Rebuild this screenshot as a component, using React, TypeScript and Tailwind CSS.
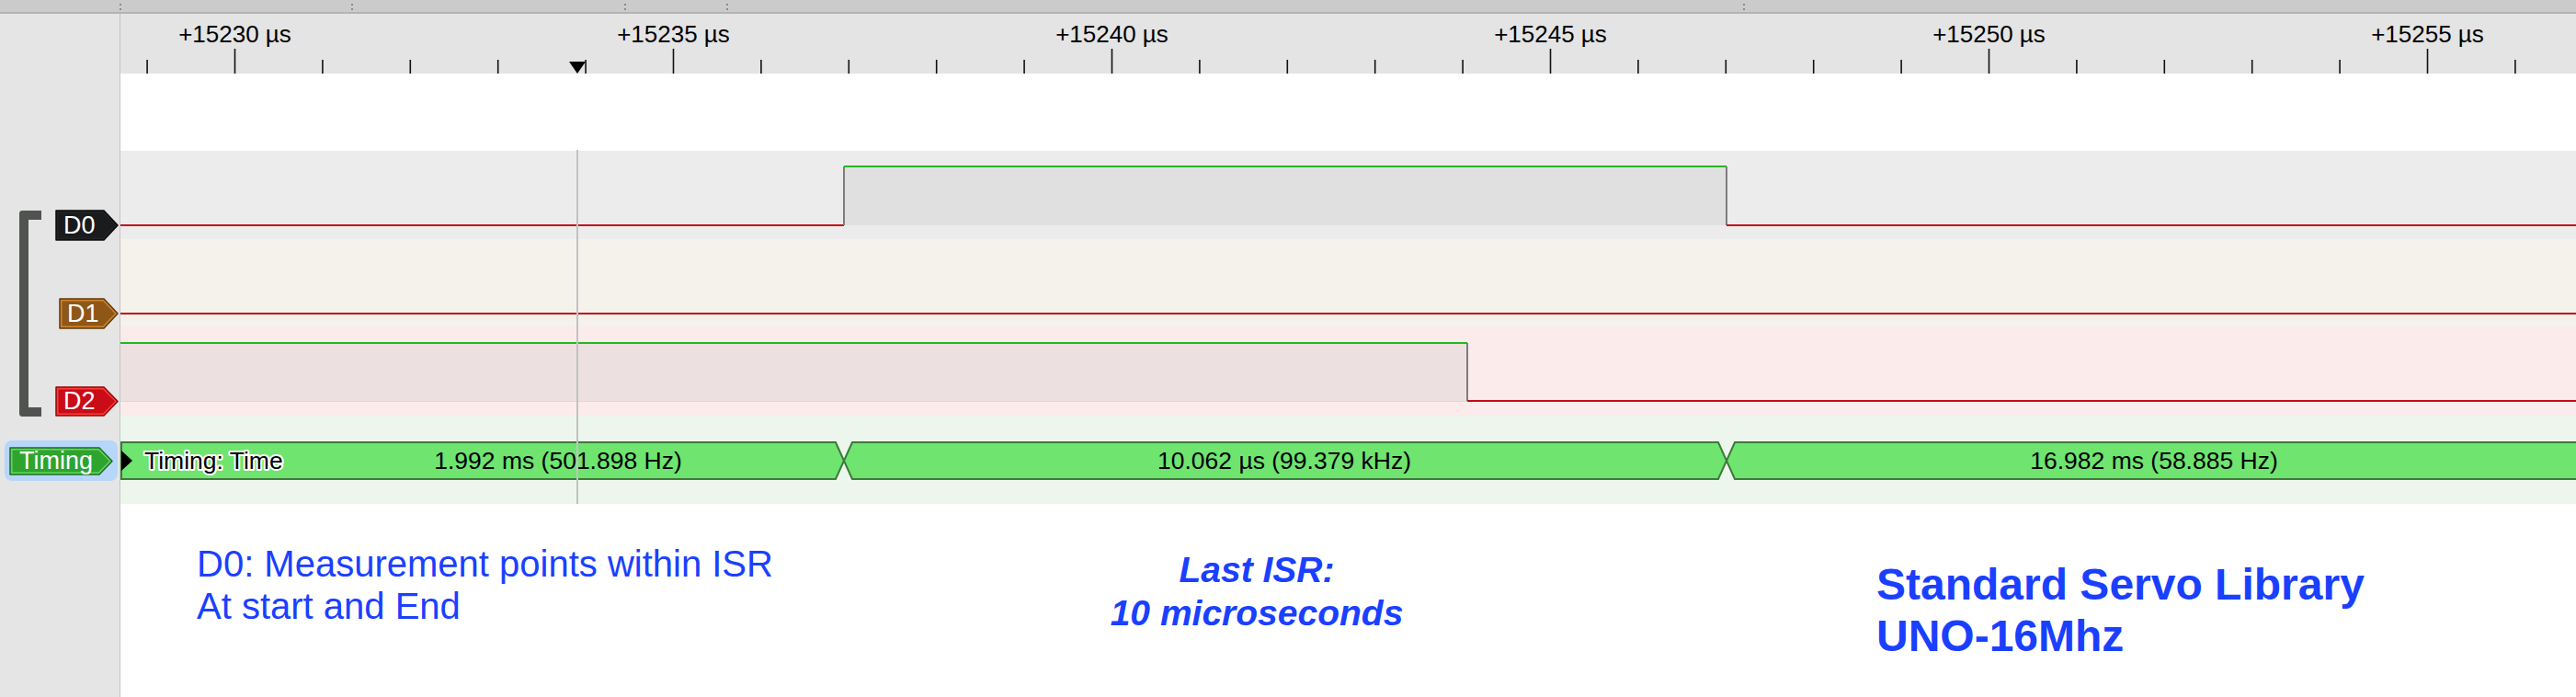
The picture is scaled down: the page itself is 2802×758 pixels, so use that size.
import React from "react";

const PX = 95.4;
const X0 = 124.5; // svg x of +15230 µs inside wave column
const W = 2671;
const C1 = 787; // D0 rise
const C2 = 1747; // D0 fall
const D2F = 1465; // D2 fall

function Header() {
  const items: React.ReactNode[] = [];
  for (let k = -1; k <= 26; k++) {
    const x = X0 + k * PX;
    const major = k % 5 === 0;
    items.push(
      <line key={"t" + k} x1={x} x2={x} y1={major ? 38 : 50} y2={65} stroke="#111" strokeWidth={1.6} />
    );
    if (major) {
      items.push(
        <text key={"l" + k} x={x} y={31} textAnchor="middle" fontSize={26} fill="#000" fontFamily="'Liberation Sans', Arial, sans-serif">
          {`+${15230 + k} µs`}
        </text>
      );
    }
  }
  return (
    <div className="h-[65px] bg-[#e4e4e4]">
      <svg width={W} height={65} className="block">
        {items}
        <polygon points="488,52 506,52 497,65" fill="#000" />
      </svg>
    </div>
  );
}

function Label({ w, h, tip, fill, rim, edge, text, pl }: { w: number; h: number; tip: number; fill: string; rim: string; edge: string; text: string; pl: number }) {
  const p = `1,1 ${w - tip},1 ${w - 1},${h / 2} ${w - tip},${h - 1} 1,${h - 1}`;
  const pi = `3.5,3.5 ${w - tip - 1},3.5 ${w - 4},${h / 2} ${w - tip - 1},${h - 3.5} 3.5,${h - 3.5}`;
  return (
    <div className="relative flex items-center" style={{ width: w, height: h }}>
      <svg width={w} height={h} className="absolute inset-0">
        <polygon points={p} fill={rim} stroke={edge} strokeWidth={1.5} strokeLinejoin="round" />
        <polygon points={pi} fill={fill} />
      </svg>
      <span className="relative text-[27px] leading-none text-white" style={{ paddingLeft: pl }}>
        {text}
      </span>
    </div>
  );
}

export default function App() {
  return (
    <div className="w-[2802px] h-[758px] overflow-hidden bg-white flex flex-col font-['Liberation_Sans',Arial,Helvetica,sans-serif]">
      {/* top bar */}
      <div className="relative h-[15px] shrink-0 bg-[#cbcbcb] border-b-2 border-[#b3b3b3]">
        {[130, 382, 679, 790, 1896].map((x) => (
          <div key={x} className="absolute top-[4px] flex flex-col gap-[3px]" style={{ left: x }}>
            <div className="w-[2px] h-[2px] bg-[#8a8a8a]" />
            <div className="w-[2px] h-[2px] bg-[#8a8a8a]" />
          </div>
        ))}
      </div>

      <div className="flex flex-1">
        {/* left panel */}
        <div className="w-[131px] shrink-0 bg-[#e5e5e5] border-r border-[#c4c4c4] flex flex-col">
          <div className="h-[149px]" />
          <div className="h-[288px] flex">
            <div className="ml-[21px] mt-[65px] w-[24px] h-[224px] border-l-[10px] border-t-[10px] border-b-[10px] border-[#515351] rounded-l-[4px]" />
            <div className="ml-[15px] flex flex-col">
              <div className="mt-[64px]">
                <Label w={69} h={34} tip={16} fill="#191b1c" rim="#202223" edge="#0a0a0a" text="D0" pl={9} />
              </div>
              <div className="mt-[62px] ml-[4px]">
                <Label w={65} h={34} tip={16} fill="#8e5718" rim="#d2822c" edge="#5b3808" text="D1" pl={9} />
              </div>
              <div className="mt-[62px]">
                <Label w={69} h={33} tip={16} fill="#c90c16" rim="#ff3a3a" edge="#8a0808" text="D2" pl={9} />
              </div>
            </div>
          </div>
          <div className="h-[96px]">
            <div className="mt-[27px] ml-[5px] w-[123px] h-[44px] rounded-[8px] bg-[#b6d6fa] flex items-center pl-[5px]">
              <Label w={113} h={31} tip={15} fill="#2ea42e" rim="#5fd85f" edge="#1c6a1c" text="Timing" pl={11} />
            </div>
          </div>
        </div>

        {/* wave column */}
        <div className="relative flex-1 flex flex-col">
          <Header />
          <div className="h-[84px] bg-white" />

          {/* D0 */}
          <div className="h-[96px] bg-[#ececec]">
            <svg width={W} height={96} className="block">
              <rect x={C1} y={17} width={C2 - C1} height={64} fill="#e0e0e0" />
              <line x1={0} x2={C1} y1={81} y2={81} stroke="#c20d17" strokeWidth={2} />
              <line x1={C1} x2={C1} y1={17} y2={81} stroke="#7d7d7d" strokeWidth={2} />
              <line x1={C1} x2={C2} y1={17} y2={17} stroke="#22b822" strokeWidth={2} />
              <line x1={C2} x2={C2} y1={17} y2={81} stroke="#7d7d7d" strokeWidth={2} />
              <line x1={C2} x2={W} y1={81} y2={81} stroke="#c20d17" strokeWidth={2} />
            </svg>
          </div>

          {/* D1 */}
          <div className="h-[95px] bg-[#f5f1eb]">
            <svg width={W} height={95} className="block">
              <line x1={0} x2={W} y1={81} y2={81} stroke="#c20d17" strokeWidth={2} />
            </svg>
          </div>

          {/* D2 */}
          <div className="h-[97px] bg-[#fbebeb]">
            <svg width={W} height={97} className="block">
              <rect x={0} y={18} width={D2F} height={63} fill="#ede0e0" />
              <line x1={0} x2={D2F} y1={81.5} y2={81.5} stroke="#e4d3d3" strokeWidth={1} />
              <line x1={0} x2={D2F} y1={18} y2={18} stroke="#22b822" strokeWidth={2} />
              <line x1={D2F} x2={D2F} y1={18} y2={81} stroke="#7d7d7d" strokeWidth={2} />
              <line x1={D2F} x2={W} y1={81} y2={81} stroke="#c20d17" strokeWidth={2} />
            </svg>
          </div>

          {/* Timing */}
          <div className="h-[96px] bg-[#edf6ed]">
            <svg width={W} height={96} className="block">
              <polygon points={`1,29 ${C1 - 9},29 ${C1},49 ${C1 - 9},69 1,69`} fill="#6fe46f" stroke="#3b7a3b" strokeWidth={2} />
              <polygon points={`${C1 + 9},29 ${C2 - 9},29 ${C2},49 ${C2 - 9},69 ${C1 + 9},69 ${C1},49`} fill="#6fe46f" stroke="#3b7a3b" strokeWidth={2} />
              <polygon points={`${C2 + 9},29 ${W + 5},29 ${W + 5},69 ${C2 + 9},69 ${C2},49`} fill="#6fe46f" stroke="#3b7a3b" strokeWidth={2} />
              <polygon points="1,38 13,49 1,60" fill="#000" />
              <g fontFamily="'Liberation Sans', Arial, sans-serif" fontSize={26.5} fill="#000">
                <text x={26} y={58} stroke="#fff" strokeWidth={4} paintOrder="stroke" strokeLinejoin="round">Timing: Time</text>
                <text x={476} y={58} textAnchor="middle">1.992 ms (501.898 Hz)</text>
                <text x={1266} y={58} textAnchor="middle">10.062 µs (99.379 kHz)</text>
                <text x={2212} y={58} textAnchor="middle">16.982 ms (58.885 Hz)</text>
              </g>
            </svg>
          </div>

          {/* annotations */}
          <div className="flex-1 flex items-start text-[#1a40ff]">
            <div className="ml-[83px] w-[700px] mt-[42px] text-[40px] leading-[46px]">
              <div>D0: Measurement points within ISR</div>
              <div>At start and End</div>
            </div>
            <div className="w-[906px] mt-[48px] text-center text-[39px] leading-[47px] font-bold italic">
              <div>Last ISR:</div>
              <div>10 microseconds</div>
            </div>
            <div className="ml-[221px] mt-[60px] text-[48px] leading-[56px] font-bold whitespace-nowrap">
              <div>Standard Servo Library</div>
              <div>UNO-16Mhz</div>
            </div>
          </div>

          {/* cursor line */}
          <div className="absolute left-[496px] top-[148px] w-[2px] h-[385px] bg-[#c2c2c2]" />
        </div>
      </div>
    </div>
  );
}
